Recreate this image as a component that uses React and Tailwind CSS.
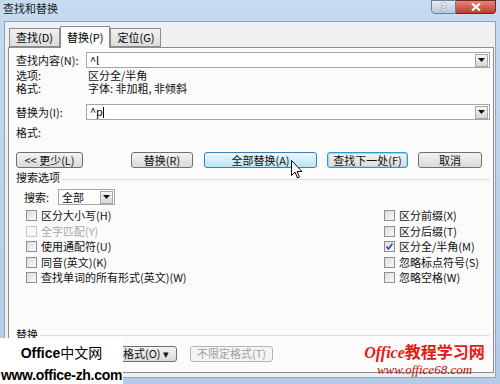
import React from 'react';

// 查找和替换 对话框
const font = "font-['Noto_Sans_CJK_SC','Noto_Sans',sans-serif]";

const DropArrow = () => (
  <div className="w-[13px] h-[13px] border border-[#a8a8a8] bg-gradient-to-b from-[#f4f4f4] to-[#d8d8d8] flex items-center justify-center">
    <svg width="7" height="4" viewBox="0 0 7 4"><path d="M0 0h7L3.5 4z" fill="#111" /></svg>
  </div>
);

const Combo = ({ value }) => (
  <div className="flex-1 h-[16px] border border-[#a5a5a5] bg-white flex items-center justify-between pl-[3px] pr-[1px]">
    <span className="text-[11px] leading-none text-black">{value}</span>
    <DropArrow />
  </div>
);

const Btn = ({ children, className = '', variant = 'normal' }) => {
  const styles = {
    normal: 'border-[#707070] bg-gradient-to-b from-[#f3f3f3] to-[#d9d9d9] text-[#111]',
    hot: 'border-[#3c7fb1] bg-gradient-to-b from-[#eaf6fd] to-[#bde4f8] text-[#111]',
    focus: 'border-[#3399cc] bg-gradient-to-b from-[#f3f3f3] to-[#dcdcdc] text-[#111] ring-1 ring-inset ring-[#9fd6f0]',
    disabled: 'border-[#b5b5b5] bg-[#f4f4f4] text-[#a0a0a0]',
  };
  return (
    <div className={`h-[16px] border rounded-[3px] flex items-center justify-center text-[11px] leading-none ${styles[variant]} ${className}`}>
      {children}
    </div>
  );
};

const Check = ({ label, checked, disabled }) => (
  <div className="h-[15.5px] flex items-center">
    <div className={`w-[11px] h-[11px] border flex items-center justify-center ${disabled ? 'border-[#c8c8c8] bg-[#f7f7f7]' : 'border-[#8e8f8f] bg-gradient-to-br from-[#dcdcdc] to-[#fbfbfb]'}`}>
      {checked && (
        <svg width="9" height="9" viewBox="0 0 9 9"><path d="M1.5 4.5l2 2.5 4-5.5" stroke="#2a4f9a" strokeWidth="1.6" fill="none" /></svg>
      )}
    </div>
    <span className={`ml-[4px] text-[11px] leading-none ${disabled ? 'text-[#a8a8a8]' : 'text-[#111]'}`}>{label}</span>
  </div>
);

const Tab = ({ children, active }) => (
  <div className={`px-[6px] border border-[#8c8c8c] text-[11px] leading-none flex items-center ${active ? 'h-[22px] bg-[#fbfbfb] border-b-0 -mb-px relative z-10' : 'h-[19px] bg-gradient-to-b from-[#f2f2f2] to-[#dcdcdc]'}`}>
    {children}
  </div>
);

export default function App() {
  return (
    <div className={`w-[500px] h-[384px] relative overflow-hidden bg-gradient-to-b from-[#c6daf0] to-[#b3cbe6] ${font}`}>
      {/* 标题栏 */}
      <div className="h-[21px] flex items-start justify-between">
        <div className="pl-[3px] pt-[3px] text-[11px] leading-none text-[#1e1e1e]">查找和替换</div>
        <div className="flex mr-[4px]">
          <div className="w-[25px] h-[14px] border border-[#6b7e98] rounded-bl-[4px] bg-gradient-to-b from-[#e3ecf6] to-[#b8c9dd] flex items-center justify-center text-[10px] font-bold text-white leading-none [text-shadow:0_0_2px_#334]">?</div>
          <div className="w-[40px] h-[14px] border border-[#6b2a22] border-l-0 rounded-br-[4px] bg-gradient-to-b from-[#e0867a] to-[#c0392b] flex items-center justify-center">
            <svg width="10" height="8" viewBox="0 0 10 8"><path d="M1 0.5l8 7M9 0.5l-8 7" stroke="#fff" strokeWidth="2.2" /></svg>
          </div>
        </div>
      </div>

      {/* 对话框主体 */}
      <div className="mx-[4px] h-[357px] bg-[#f0f0f0] border border-[#8fa4bf] pl-[3px] pr-[1px] pt-[4px]">
        <div className="flex items-end pl-[1px]">
          <Tab>查找(D)</Tab>
          <Tab active>替换(P)</Tab>
          <Tab>定位(G)</Tab>
        </div>

        <div className="h-[326px] border border-[#8c8c8c] bg-[#fbfbfb] pl-[7px] pr-[3px] text-[11px] leading-none text-[#111]">
          <div className="mt-[4px] flex items-center">
            <div className="w-[70px]">查找内容(N):</div>
            <Combo value="^l" />
          </div>
          <div className="h-[13px] mt-[1px] flex items-center">
            <div className="w-[72px]">选项:</div>
            <div>区分全/半角</div>
          </div>
          <div className="h-[13px] flex items-center">
            <div className="w-[72px]">格式:</div>
            <div>字体: 非加粗, 非倾斜</div>
          </div>
          <div className="mt-[9px] flex items-center">
            <div className="w-[70px]">替换为(I):</div>
            <Combo value={<span>^p<span className="inline-block w-px h-[11px] bg-black align-middle" /></span>} />
          </div>
          <div className="h-[13px] mt-[6px] flex items-center">
            <div>格式:</div>
          </div>

          {/* 按钮行 */}
          <div className="mt-[13px] flex items-center">
            <Btn className="w-[67px]">&lt;&lt; 更少(L)</Btn>
            <Btn className="w-[62px] ml-[48px]">替换(R)</Btn>
            <Btn variant="hot" className="w-[113px] ml-[11px]">全部替换(A)</Btn>
            <Btn variant="focus" className="w-[81px] ml-[10px]">查找下一处(F)</Btn>
            <Btn className="w-[64px] ml-[10px]">取消</Btn>
          </div>

          {/* 搜索选项 */}
          <div className="mt-[3px] h-[13px] flex items-center">
            <span>搜索选项</span>
            <div className="flex-1 h-px bg-[#dcdcdc] ml-[2px] mt-[4px]" />
          </div>
          <div className="mt-[5px] pl-[8px] flex items-center">
            <span className="w-[34px]">搜索:</span>
            <div className="w-[57px] h-[16px] border border-[#a5a5a5] bg-white flex items-center justify-between pl-[3px] pr-[1px]">
              <span>全部</span>
              <DropArrow />
            </div>
          </div>

          <div className="mt-[3px] flex">
            <div className="flex-1 pl-[10px]">
              <Check label="区分大小写(H)" />
              <Check label="全字匹配(Y)" disabled />
              <Check label="使用通配符(U)" />
              <Check label="同音(英文)(K)" />
              <Check label="查找单词的所有形式(英文)(W)" />
            </div>
            <div className="w-[106px]">
              <Check label="区分前缀(X)" />
              <Check label="区分后缀(T)" />
              <Check label="区分全/半角(M)" checked />
              <Check label="忽略标点符号(S)" />
              <Check label="忽略空格(W)" />
            </div>
          </div>

          {/* 替换 */}
          <div className="mt-[42px] h-[13px] flex items-center">
            <span>替换</span>
            <div className="flex-1 h-px bg-[#dcdcdc] ml-[2px] mt-[2px]" />
          </div>
          <div className="mt-[5px] flex items-center">
            <Btn className="w-[62px] ml-[99px]">格式(O) ▾</Btn>
            <Btn variant="disabled" className="w-[83px] ml-[13px]">不限定格式(T)</Btn>
          </div>
        </div>
      </div>

      {/* 鼠标指针 */}
      <svg className="absolute left-[291px] top-[160px]" width="12" height="19" viewBox="0 0 12 19">
        <path d="M0.5 0.5v15l3.5-3.5 2.5 6 2-1-2.5-5.5h5z" fill="#fff" stroke="#000" strokeWidth="1" strokeLinejoin="round" />
      </svg>

      {/* 水印 */}
      <div className="absolute left-0 top-[338px] w-[123px] h-[46px] bg-white flex flex-col items-center font-['Liberation_Sans','Noto_Sans_CJK_SC',sans-serif] font-bold text-black">
        <div className="mt-[8px] text-[14px] leading-none">Office<span className="font-normal">中文网</span></div>
        <div className="mt-[8px] text-[14px] leading-none tracking-[-0.3px]">www.office-zh.com</div>
      </div>
      <div className="absolute left-[361px] top-[345px] w-[127px] flex flex-col items-center font-['Liberation_Serif','Noto_Sans_CJK_SC',serif] italic">
        <div className="text-[16px] leading-none text-[#e31b12] font-bold">Office<span className="not-italic">教程学习网</span></div>
        <div className="mt-[2px] text-[13px] leading-none text-[#b3120b]">www.office68.com</div>
      </div>
    </div>
  );
}
